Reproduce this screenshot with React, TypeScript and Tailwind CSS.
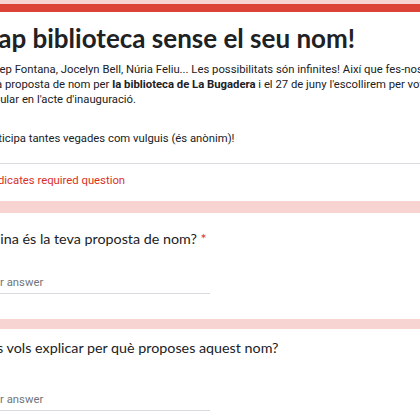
import React from "react";

const sans = { fontFamily: "Lato, 'Open Sans', sans-serif" };

export default function App() {
  return (
    <div className="w-[420px] h-[420px] overflow-hidden bg-[#f7d3d2] pt-[4px]" style={{ fontFamily: "Roboto, 'Liberation Sans', sans-serif" }}>
      <div className="ml-[-39px] w-[540px] flex flex-col">
        {/* Header card */}
        <div className="bg-white">
          <div className="h-[8px] bg-[#db4437]" />
          <div className="px-[20px] pt-[8px]">
            <h1 className="text-[26px] leading-[36px] font-bold text-[#202124] whitespace-nowrap" style={sans}>
              Cap biblioteca sense el seu nom!
            </h1>
            <p className="mt-[6px] text-[11.3px] leading-[15px] text-[#202124] whitespace-nowrap">
              Josep Fontana, Jocelyn Bell, Núria Feliu... Les possibilitats són infinites! Així que fes-nos arribar la
              <br />
              teva proposta de nom per <b>la biblioteca de La Bugadera</b> i el 27 de juny l'escollirem per votació
              <br />
              popular en l'acte d'inauguració.
            </p>
            <p className="mt-[24px] text-[11.3px] leading-[15px] text-[#202124]">
              Participa tantes vegades com vulguis (és anònim)!
            </p>
          </div>
          <div className="mt-[17px] h-px bg-[#dadce0]" />
          <div className="px-[20px] pt-[9px] pb-[13px] text-[11.3px] leading-[15px] text-[#d93025]">
            * Indicates required question
          </div>
        </div>

        {/* Question 1 */}
        <div className="mt-[12px] bg-white px-[20px] pt-[16px] pb-[25px]">
          <div className="text-[14.3px] leading-[20px] text-[#202124]" style={sans}>
            Quina és la teva proposta de nom? <span className="text-[#d93025]">*</span>
          </div>
          <div className="mt-[26px] w-[229px] border-b border-[#dadce0] pb-[3px] text-[11.3px] leading-[15px] text-[#70757a]">
            Your answer
          </div>
        </div>

        {/* Question 2 */}
        <div className="mt-[10px] bg-white px-[20px] pt-[9px] pb-[25px]">
          <div className="text-[14.3px] leading-[20px] text-[#202124]" style={sans}>
            Ens vols explicar per què proposes aquest nom?
          </div>
          <div className="mt-[34px] w-[229px] border-b border-[#dadce0] pb-[3px] text-[11.3px] leading-[15px] text-[#70757a]">
            Your answer
          </div>
        </div>
      </div>
    </div>
  );
}
